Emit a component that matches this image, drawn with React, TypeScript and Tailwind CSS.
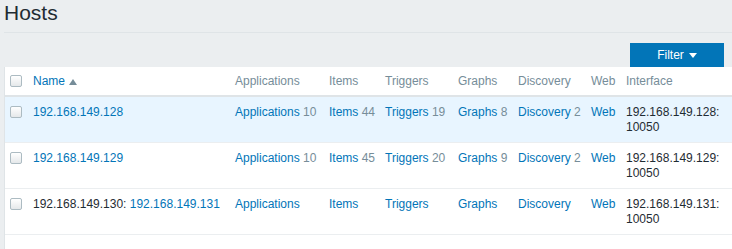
import React from "react";

const link = "text-[#0275b8]";
const gray = "text-[#768d99]";

const Checkbox = () => (
  <div className="w-[12px] h-[12px] rounded-[2px] border border-[#acbbc2] bg-gradient-to-b from-white to-[#e5e8ea]" />
);

const Counted = ({ label, count }: { label: string; count?: number }) => (
  <>
    <span className={link}>{label}</span>
    {count !== undefined && <span className={gray}> {count}</span>}
  </>
);

const rows = [
  { host: null, name: "192.168.149.128", apps: 10, items: 44, triggers: 19, graphs: 8, disc: 2, ip: "192.168.149.128:", hl: true },
  { host: null, name: "192.168.149.129", apps: 10, items: 45, triggers: 20, graphs: 9, disc: 2, ip: "192.168.149.129:", hl: false },
  { host: "192.168.149.130:", name: "192.168.149.131", ip: "192.168.149.131:", hl: false },
] as any[];

const App: React.FC = () => {
  const th = "text-left font-normal pl-[5px] pr-[5px] pt-[7px] pb-[6px] align-top";
  const td = "pl-[5px] pr-[5px] pt-[8px] pb-[7px] align-top whitespace-nowrap";
  return (
    <div className="w-[732px] h-[249px] bg-[#ebeef0] text-[12px] leading-[15px] text-[#1f2c33] overflow-hidden" style={{ fontFamily: '"Liberation Sans", Arial, sans-serif' }}>
      <div className="ml-[4px] h-[33px] border-b border-[#dfe4e7]">
        <h1 className="text-[21px] leading-[24px] pt-[1px]">Hosts</h1>
      </div>
      <div className="flex justify-end pr-[8px] pt-[10px]">
        <button className="w-[94px] h-[24px] bg-[#0275b8] text-white flex items-center justify-center gap-[5px]">
          <span>Filter</span>
          <svg width="8" height="5" viewBox="0 0 8 5"><path d="M0 0h8L4 5z" fill="white" /></svg>
        </button>
      </div>
      <div className="ml-[4px] bg-white border-l border-[#dfe4e7] pb-[20px]">
        <table className="table-fixed w-full">
          <colgroup>
            <col className="w-[23px]" />
            <col className="w-[202px]" />
            <col className="w-[94px]" />
            <col className="w-[56px]" />
            <col className="w-[73px]" />
            <col className="w-[60px]" />
            <col className="w-[73px]" />
            <col className="w-[35px]" />
            <col />
          </colgroup>
          <thead>
            <tr className={`border-b-2 border-[#dfe4e7] ${gray}`}>
              <th className={`${th} pt-[8px]`}><Checkbox /></th>
              <th className={th}>
                <span className={`${link} inline-flex items-center gap-[4px]`}>
                  Name
                  <svg width="8" height="6" viewBox="0 0 8 6"><path d="M0 6h8L4 0z" fill="#768d99" /></svg>
                </span>
              </th>
              <th className={th}>Applications</th>
              <th className={th}>Items</th>
              <th className={th}>Triggers</th>
              <th className={th}>Graphs</th>
              <th className={th}>Discovery</th>
              <th className={th}>Web</th>
              <th className={th}>Interface</th>
            </tr>
          </thead>
          <tbody>
            {rows.map((r, i) => (
              <tr key={i} className={`border-b border-[#ebeef0] ${r.hl ? "bg-[#e8f5ff]" : ""}`}>
                <td className={`${td} pt-[9px]`}><Checkbox /></td>
                <td className={td}>
                  {r.host && <span>{r.host} </span>}
                  <span className={link}>{r.name}</span>
                </td>
                <td className={td}><Counted label="Applications" count={r.apps} /></td>
                <td className={td}><Counted label="Items" count={r.items} /></td>
                <td className={td}><Counted label="Triggers" count={r.triggers} /></td>
                <td className={td}><Counted label="Graphs" count={r.graphs} /></td>
                <td className={td}><Counted label="Discovery" count={r.disc} /></td>
                <td className={td}><span className={link}>Web</span></td>
                <td className={td}>{r.ip}<br />10050</td>
              </tr>
            ))}
          </tbody>
        </table>
      </div>
    </div>
  );
};

export default App;
